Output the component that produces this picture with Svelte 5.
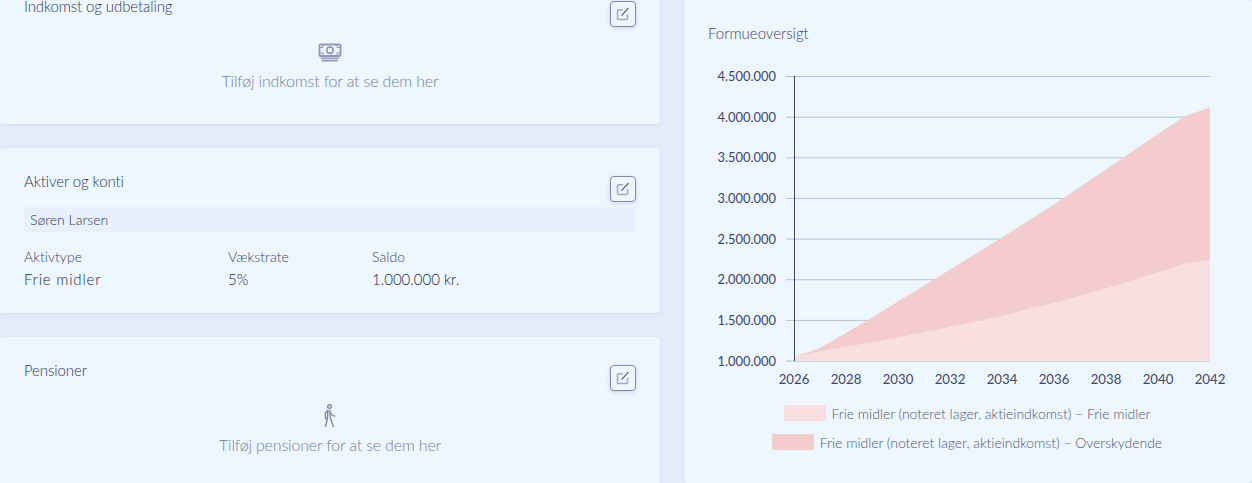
<script>
  const yTicks = ['4.500.000','4.000.000','3.500.000','3.000.000','2.500.000','2.000.000','1.500.000','1.000.000'];
  const years = [2026,2028,2030,2032,2034,2036,2038,2040,2042];
  const yOf = (i) => 76.5 + i * 40.65;
  const xOf = (yr) => 794 + (yr - 2026) * 26;
  const lowerPts = [[794,357],[820,351.5],[846,347],[872,342.5],[898,337.5],[924,332.5],[950,327],[976,321.5],[1002,316],[1028,309],[1054,303],[1080,296],[1106,288.5],[1132,280.5],[1158,272.5],[1184,264],[1210,260]];
  const upperPts = [[794,357],[820,348],[846,333],[872,317.5],[898,301.5],[924,285.5],[950,269.5],[976,253.5],[1002,237.5],[1028,221],[1054,204.5],[1080,187],[1106,169.5],[1132,151.5],[1158,134],[1184,116.5],[1210,107.5]];
  const line = (p) => p.map(([x, y]) => `${x},${y}`).join(' ');
  const base = 361;
  const lowerArea = `794,${base} ${line(lowerPts)} 1210,${base}`;
  const upperArea = `${line(upperPts)} ${line([...lowerPts].reverse())}`;
</script>

{#snippet editBtn()}
  <button class="edit" aria-label="Rediger">
    <svg viewBox="0 0 16 16" width="16" height="16" fill="none"><path d="M8 3.7H3.7a1.2 1.2 0 0 0-1.2 1.2v7.4a1.2 1.2 0 0 0 1.2 1.2h7.6a1.2 1.2 0 0 0 1.2-1.2V8" stroke="#a2abc2" stroke-width="1.5"/><path d="M6.5 9.6 13.4 2.2" stroke="#4a5578" stroke-width="1.1"/></svg>
  </button>
{/snippet}

<div class="page">
  <div class="layout">
    <div class="left">
      <section class="card income">
        <div class="head">
          <h2>Indkomst og udbetaling</h2>
          {@render editBtn()}
        </div>
        <div class="empty">
          <svg viewBox="0 0 24 20" width="24" height="20" fill="none" stroke="#8f99b3">
            <rect x="1.5" y="1.5" width="21" height="11.5" rx="1" stroke-width="1.8"/>
            <circle cx="12" cy="7.2" r="3.2" stroke-width="1.6"/>
            <path d="M2 4.5 5 4.5 5 2M22 4.5H19V2M2 10H5V12.5M22 10H19V12.5" stroke-width="1"/>
            <path d="M3 15.2H21" stroke-width="1.4"/><path d="M4 17.6H20" stroke-width="1.8"/>
          </svg>
          <p>Tilføj indkomst for at se dem her</p>
        </div>
      </section>

      <section class="card assets">
        <div class="head">
          <h2>Aktiver og konti</h2>
          {@render editBtn()}
        </div>
        <div class="owner">Søren Larsen</div>
        <div class="cols">
          <div class="c1"><span>Aktivtype</span><b class="wide">Frie midler</b></div>
          <div class="c2"><span>Vækstrate</span><b>5%</b></div>
          <div class="c3"><span>Saldo</span><b>1.000.000 kr.</b></div>
        </div>
      </section>

      <section class="card pensions">
        <div class="head">
          <h2>Pensioner</h2>
          {@render editBtn()}
        </div>
        <div class="empty walk">
          <svg viewBox="0 0 16 24" width="16" height="24" fill="none" stroke="#7f89a5" stroke-width="1.4">
            <circle cx="7.5" cy="2.6" r="1.8"/>
            <path d="M6 6 3.2 9.5 3.6 14.5 5.2 15M6 6 5.5 14 3.5 23M7.8 5.8 8.5 14.5 11.5 23M8 7.5l1.5 3 3.8 2"/>
          </svg>
          <p>Tilføj pensioner for at se dem her</p>
        </div>
      </section>
    </div>

    <section class="card chart">
      <h2>Formueoversigt</h2>
      <svg class="plot" viewBox="684 50 568 350" width="568" height="350">
        {#each yTicks as t, i}
          <line x1="786" x2="1210" y1={yOf(i)} y2={yOf(i)} stroke={i === 7 ? '#b4bccb' : '#abc3d6'} stroke-width="1"/>
          <text x="776" y={yOf(i) + 4.5} text-anchor="end" class="tick">{t}</text>
        {/each}
        <polygon points={lowerArea} fill="#f9e0e0"/>
        <polygon points={upperArea} fill="#f5cccd"/>
        <line x1="794.5" x2="794.5" y1="76" y2="361" stroke="#3d4668" stroke-width="1"/>
        {#each years as yr}
          <text x={xOf(yr)} y="384" text-anchor="middle" class="tick year">{yr}</text>
        {/each}
      </svg>
      <div class="legend">
        <div class="item"><i class="sw light"></i>Frie midler (noteret lager, aktieindkomst) – Frie midler</div>
        <div class="item"><i class="sw dark"></i>Frie midler (noteret lager, aktieindkomst) – Overskydende</div>
      </div>
    </section>
  </div>
</div>

<style>
  :global(body) { margin: 0; }
  .page {
    width: 1252px;
    height: 483px;
    overflow: hidden;
    background: #e2edf9;
    font-family: Lato, sans-serif;
    color: #3a4365;
  }
  .layout {
    display: flex;
    gap: 24px;
    align-items: flex-start;
  }
  .left {
    width: 660px;
    flex: none;
    display: flex;
    flex-direction: column;
    gap: 24px;
    margin-top: -27px;
  }
  .card {
    background: #eef7ff;
    border-radius: 4px;
    box-shadow: 0 1px 4px rgba(120, 150, 200, 0.18);
    box-sizing: border-box;
    padding: 24px;
  }
  .income { height: 151px; }
  .assets { height: 165px; }
  .pensions { height: 180px; }
  .head {
    display: flex;
    justify-content: space-between;
    align-items: flex-start;
    height: 35px;
  }
  h2 {
    margin: -1px 0 0;
    font-size: 15px;
    font-weight: 300;
    line-height: 20px;
    letter-spacing: -0.1px;
    color: #2f3858;
  }
  .edit {
    width: 26px;
    height: 26px;
    margin-top: 4px;
    padding: 0;
    display: flex;
    align-items: center;
    justify-content: center;
    background: #eef7ff;
    border: 1px solid #7d8cae;
    border-radius: 4px;
    box-shadow: 0 1px 4px rgba(90, 120, 180, 0.25);
  }
  .empty {
    display: flex;
    flex-direction: column;
    align-items: center;
    gap: 8px;
    margin-top: 11px;
  }
  .walk { margin-top: 8px; gap: 7px; }
  .empty p {
    margin: 0;
    font-size: 16px;
    font-weight: 300;
    line-height: 20px;
    letter-spacing: -0.18px;
    color: #757e9c;
  }
  .owner {
    background: #e8f1fb;
    height: 25px;
    line-height: 25px;
    padding-left: 6px;
    font-size: 14px;
    font-weight: 300;
    color: #2f3858;
  }
  .cols {
    display: flex;
    margin-top: 16px;
  }
  .cols > div { display: flex; flex-direction: column; }
  .c1 { width: 204px; }
  .c2 { width: 144px; }
  .cols span { font-size: 14px; font-weight: 300; line-height: 18px; letter-spacing: 0.05px; }
  .cols b { font-size: 15px; font-weight: 300; line-height: 20px; margin-top: 3px; color: #1c2545; }
  .cols b.wide { letter-spacing: 0.8px; }
  .chart {
    width: 568px;
    flex: none;
    height: 483px;
    padding: 0;
    position: relative;
  }
  .chart h2 {
    padding: 24px 24px 0;
    font-size: 15px;
    letter-spacing: 0;
    color: #3a4365;
  }
  .plot { display: block; margin-top: 7px; }
  .tick { font-size: 12.9px; fill: #3d4668; font-weight: 400; font-family: Lato, sans-serif; }
  .year { font-size: 13.2px; }
  .legend {
    display: flex;
    flex-direction: column;
    align-items: center;
    gap: 9px;
    margin-top: 3px;
    padding-right: 2px;
    font-size: 14px;
    font-weight: 300;
    letter-spacing: -0.03px;
    color: #4d5677;
  }
  .item { display: flex; align-items: center; gap: 6px; height: 20px; white-space: nowrap; }
  .sw { display: block; width: 42px; height: 16px; }
  .light { background: #f9e0e0; }
  .dark { background: #f5cccd; }
</style>
